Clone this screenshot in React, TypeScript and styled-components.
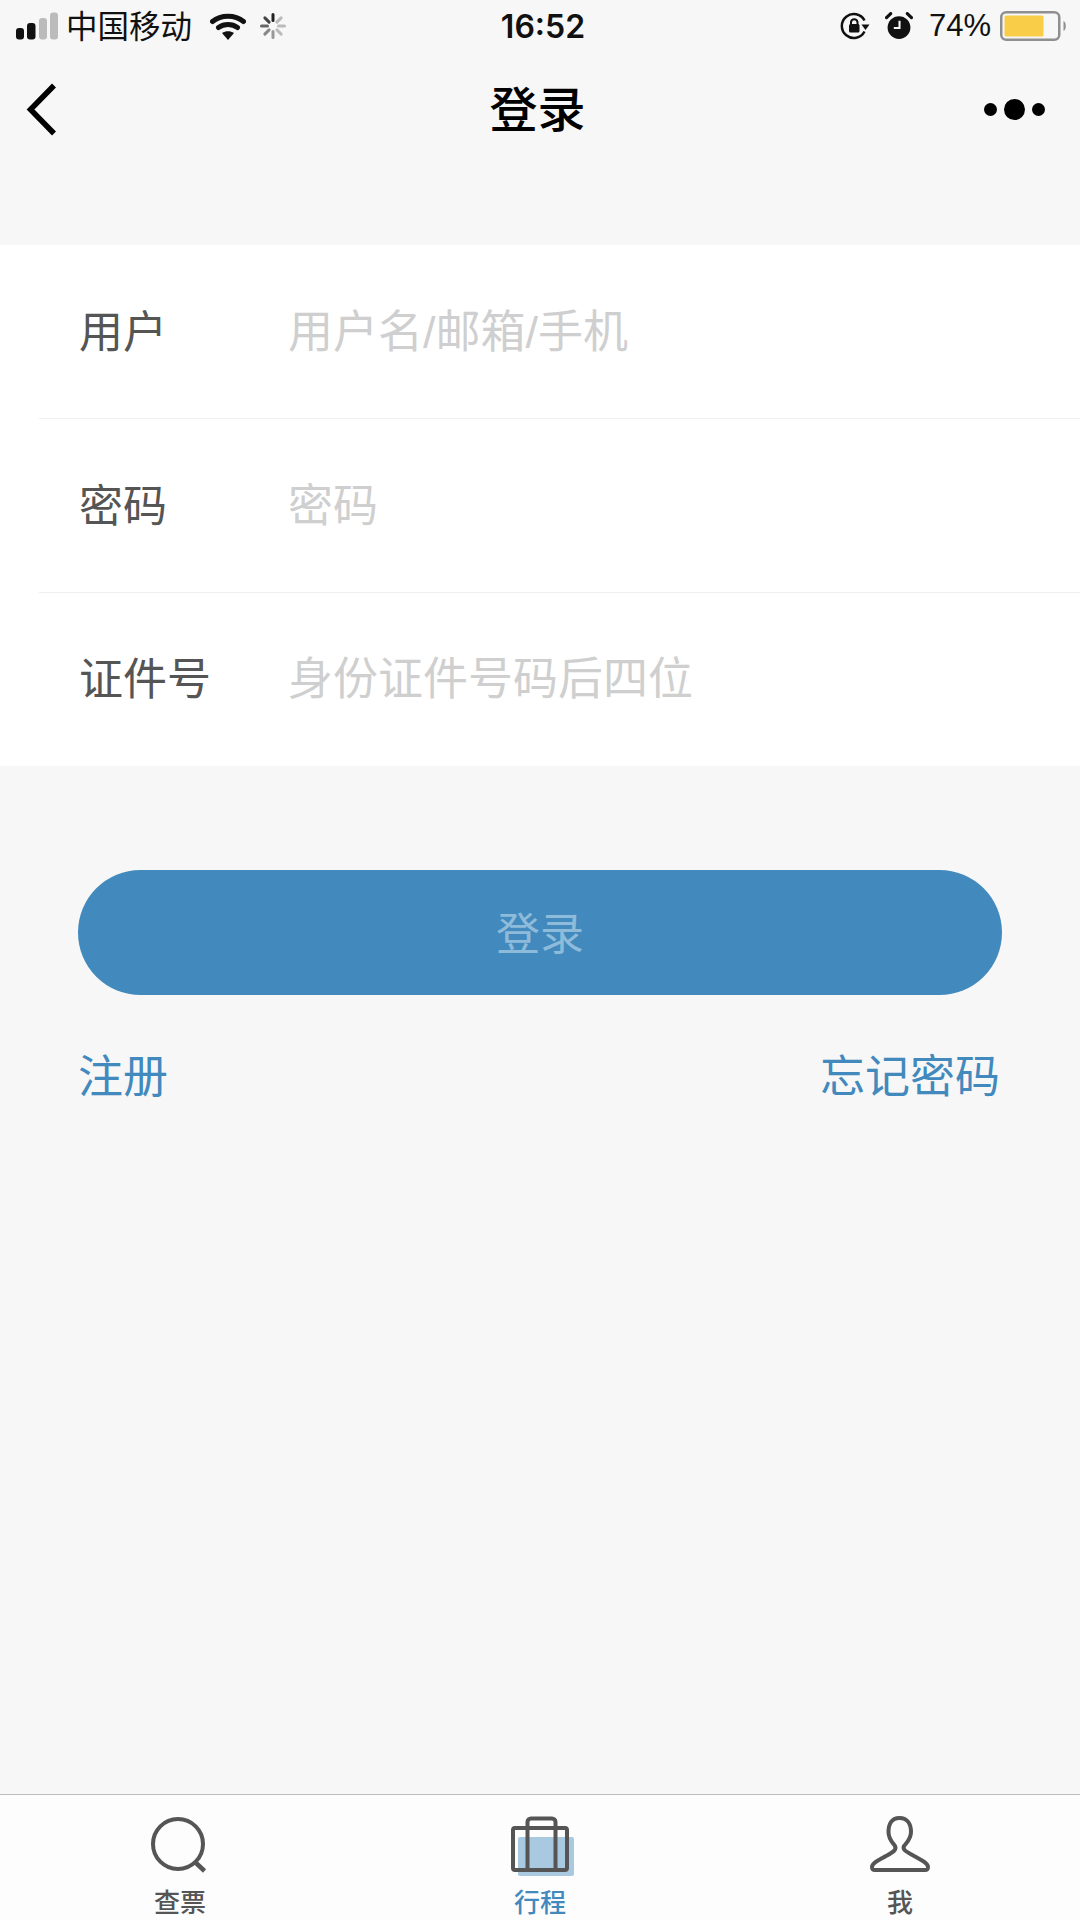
import styled, { createGlobalStyle } from "styled-components";

const cjk = `"Liberation Sans", "Noto Sans CJK SC", "Noto Sans", sans-serif`;

const Global = createGlobalStyle`
  html, body { margin: 0; padding: 0; background: #f7f7f7; }
  * { box-sizing: border-box; }
`;

const Page = styled.div`
  width: 1080px;
  height: 1920px;
  display: flex;
  flex-direction: column;
  background: #f7f7f7;
  font-family: ${cjk};
  overflow: hidden;
`;

const StatusBar = styled.div`
  height: 54px;
  padding: 0 13px 2px 16px;
  display: grid;
  grid-template-columns: 1fr auto 1fr;
  align-items: center;
  color: #111;
`;

const StatusSide = styled.div<{ $right?: boolean }>`
  display: flex;
  align-items: center;
  justify-content: ${(p) => (p.$right ? "flex-end" : "flex-start")};
`;

const Carrier = styled.span`
  font-size: 31.5px;
  margin-left: 8px;
  margin-right: 18px;
  padding-top: 3px;
  line-height: 1;
`;

const Spacer = styled.span`
  width: 14px;
`;

const Clock = styled.span`
  font-family: Inter, "Liberation Sans", sans-serif;
  font-size: 32px;
  font-weight: 600;
  margin-left: 3px;
`;

const Percent = styled.span`
  font-family: "Liberation Sans", Arial, sans-serif;
  font-size: 31px;
  margin: 0 9px 0 16px;
`;

const NavBar = styled.div`
  height: 111px;
  padding: 0 35px 0 26px;
  display: grid;
  grid-template-columns: 1fr auto 1fr;
  align-items: center;
`;

const Title = styled.div`
  font-size: 48px;
  font-weight: 500;
  color: #000;
  line-height: 1;
  padding-top: 2px;
  margin-left: 4px;
`;

const NavRight = styled.div`
  display: flex;
  justify-content: flex-end;
  align-items: center;
  gap: 7px;
`;

const Dot = styled.span<{ $big?: boolean }>`
  display: block;
  width: ${(p) => (p.$big ? 21 : 13)}px;
  height: ${(p) => (p.$big ? 21 : 13)}px;
  border-radius: 50%;
  background: #000;
`;

const Form = styled.div`
  margin-top: 80px;
  background: #fff;
  display: flex;
  flex-direction: column;
`;

const Row = styled.div<{ $last?: boolean }>`
  height: ${(p) => (p.$last ? 173 : 174)}px;
  margin-left: 39px;
  padding-left: 40px;
  padding-top: ${(p) => (p.$last ? 0 : 2)}px;
  display: flex;
  align-items: center;
  border-bottom: ${(p) => (p.$last ? "none" : "1px solid #efefef")};
`;

const Label = styled.div`
  width: 209px;
  font-size: 44px;
  color: #555;
  line-height: 1;
`;

const Placeholder = styled.div`
  font-size: 45px;
  color: #cfcfcf;
  line-height: 1;
`;

const Actions = styled.div`
  padding: 104px 78px 0;
  display: flex;
  flex-direction: column;
`;

const LoginButton = styled.div`
  height: 125px;
  padding-bottom: 4px;
  border-radius: 63px;
  background: #4289bd;
  color: #8fbbda;
  font-size: 44px;
  display: flex;
  align-items: center;
  justify-content: center;
`;

const Links = styled.div`
  margin-top: 55px;
  display: flex;
  justify-content: space-between;
  padding: 0 2px 0 0;
`;

const LinkText = styled.span`
  font-size: 45px;
  line-height: 1.25;
  color: #4289bd;
`;

const TabBar = styled.div`
  margin-top: auto;
  height: 126px;
  background: #fdfdfd;
  border-top: 1px solid #bdbdbd;
  display: grid;
  grid-template-columns: 360px 360px 360px;
`;

const Tab = styled.div<{ $active?: boolean }>`
  display: flex;
  flex-direction: column;
  align-items: center;
  padding-top: 21px;
  color: ${(p) => (p.$active ? "#4289bd" : "#555")};
`;

const TabLabel = styled.span`
  margin-top: 10px;
  font-size: 26px;
  font-weight: 500;
  line-height: 34px;
`;

const Signal = () => (
  <svg width="42" height="28" viewBox="0 0 42 28">
    <rect x="0" y="16" width="8" height="11.500" rx="3" fill="#111" />
    <rect x="11" y="11" width="8.500" height="16.500" rx="3" fill="#111" />
    <rect x="23" y="6" width="8" height="21.500" rx="3" fill="#bbb" />
    <rect x="34" y="0.500" width="8" height="27" rx="3" fill="#bbb" />
  </svg>
);

const Wifi = () => (
  <svg width="36" height="27" viewBox="0 0 36 27">
    <path d="M2.500 8.500 C11 1.500 25 1.500 33.500 8.500" fill="none" stroke="#111" strokeWidth="5" strokeLinecap="round" />
    <path d="M8.500 14.500 C14 10.500 22 10.500 27.500 14.500" fill="none" stroke="#111" strokeWidth="5" strokeLinecap="round" />
    <path d="M12 20 C15.500 17.500 20.500 17.500 24 20 L18 27 Z" fill="#111" />
  </svg>
);

const Spinner = () => {
  const spokes = [0, 45, 90, 135, 180, 225, 270, 315];
  const shades = ["#222", "#bbb", "#bbb", "#bbb", "#999", "#888", "#666", "#444"];
  return (
    <svg width="26" height="26" viewBox="0 0 26 26">
      {spokes.map((a, i) => (
        <line key={a} x1="13" y1="1.500" x2="13" y2="7.500" stroke={shades[i]} strokeWidth="3" strokeLinecap="round" transform={`rotate(${a} 13 13)`} />
      ))}
    </svg>
  );
};

const RotationLock = () => (
  <svg width="30" height="28" viewBox="0 0 30 28">
    <path d="M24.500 19.500 A12 12 0 1 1 24.500 8.500" fill="none" stroke="#111" strokeWidth="2.500" />
    <path d="M21.500 12.500 L29.500 12.500 L25.500 18 Z" fill="#111" />
    <rect x="9" y="12" width="10.500" height="8.500" rx="1.500" fill="#111" />
    <path d="M11 13 V10 A3.300 3.300 0 0 1 17.500 10 V13" fill="none" stroke="#111" strokeWidth="2" />
  </svg>
);

const Alarm = () => (
  <svg width="28" height="28" viewBox="0 0 27 27" style={{ marginLeft: 15 }}>
    <circle cx="13.500" cy="15" r="11" fill="#111" />
    <path d="M1.500 5.500 L5.500 1.500 M25.500 5.500 L21.500 1.500" stroke="#111" strokeWidth="3" strokeLinecap="round" />
    <path d="M14 8.500 V15.500 H8.500" fill="none" stroke="#f7f7f7" strokeWidth="2" />
  </svg>
);

const Battery = () => (
  <svg width="67" height="30" viewBox="0 0 67 30">
    <rect x="1.250" y="1.250" width="58" height="27.500" rx="5" fill="none" stroke="#8f8f8f" strokeWidth="2.500" />
    <rect x="4.500" y="4.500" width="39" height="21" rx="1.500" fill="#f9cd48" />
    <path d="M63.500 10 C66.500 11 66.500 19 63.500 20 Z" fill="#8f8f8f" />
  </svg>
);

const Back = () => (
  <svg width="34" height="54" viewBox="0 0 34 54">
    <path d="M28 2.500 L4.500 26.500 L28 50.500" fill="none" stroke="#000" strokeWidth="5.500" />
  </svg>
);

const SearchIcon = () => (
  <svg width="60" height="60" viewBox="0 0 60 60">
    <circle cx="28" cy="28" r="25" fill="none" stroke="#555" strokeWidth="4" />
    <path d="M45 46 L54.500 55" stroke="#555" strokeWidth="4.500" />
  </svg>
);

const TripIcon = () => (
  <svg width="72" height="60" viewBox="0 0 72 60">
    <rect x="14" y="21" width="56" height="39" rx="2" fill="#4289bd" opacity="0.45" />
    <rect x="9" y="12" width="54" height="42" rx="2" fill="none" stroke="#555" strokeWidth="4" />
    <path d="M23.500 54 V6 A3.500 3.500 0 0 1 27 2.500 H48 A3.500 3.500 0 0 1 51.500 6 V54" fill="none" stroke="#555" strokeWidth="4" />
  </svg>
);

const MeIcon = () => (
  <svg width="60" height="60" viewBox="0 0 60 60">
    <path
      d="M29.500 2 C21 2 18.500 9 18.500 16 C18.500 23 22 26 25 30 C27 34 23 36 16 40 C8 44.500 2 47 2 51 C2 54 3 54 5 54 H55 C57 54 58 54 58 51 C58 47 52 44.500 44 40 C37 36 32 34 34 30 C37 26 41 23 41 16 C41 9 38 2 29.500 2 Z"
      fill="none"
      stroke="#555"
      strokeWidth="4"
    />
  </svg>
);

export default function App() {
  return (
    <>
      <Global />
      <Page>
        <StatusBar>
          <StatusSide>
            <Signal />
            <Carrier>中国移动</Carrier>
            <Wifi />
            <Spacer />
            <Spinner />
          </StatusSide>
          <Clock>16:52</Clock>
          <StatusSide $right>
            <RotationLock />
            <Alarm />
            <Percent>74%</Percent>
            <Battery />
          </StatusSide>
        </StatusBar>
        <NavBar>
          <Back />
          <Title>登录</Title>
          <NavRight>
            <Dot />
            <Dot $big />
            <Dot />
          </NavRight>
        </NavBar>
        <Form>
          <Row>
            <Label>用户</Label>
            <Placeholder>用户名/邮箱/手机</Placeholder>
          </Row>
          <Row>
            <Label>密码</Label>
            <Placeholder>密码</Placeholder>
          </Row>
          <Row $last>
            <Label>证件号</Label>
            <Placeholder>身份证件号码后四位</Placeholder>
          </Row>
        </Form>
        <Actions>
          <LoginButton>登录</LoginButton>
          <Links>
            <LinkText>注册</LinkText>
            <LinkText>忘记密码</LinkText>
          </Links>
        </Actions>
        <TabBar>
          <Tab>
            <SearchIcon />
            <TabLabel>查票</TabLabel>
          </Tab>
          <Tab $active>
            <TripIcon />
            <TabLabel>行程</TabLabel>
          </Tab>
          <Tab>
            <MeIcon />
            <TabLabel>我</TabLabel>
          </Tab>
        </TabBar>
      </Page>
    </>
  );
}
